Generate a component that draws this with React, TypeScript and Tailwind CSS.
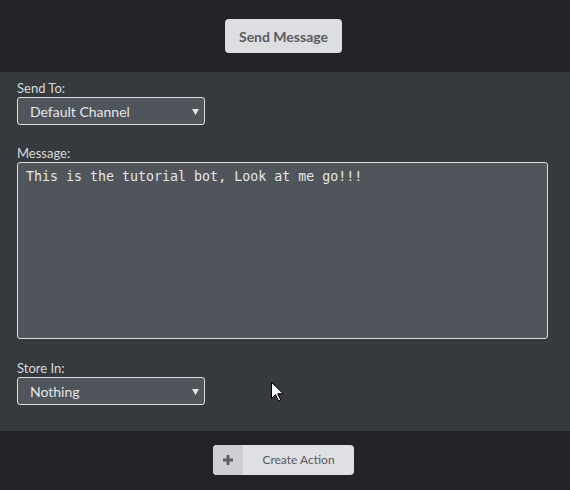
import React from 'react';

const Caret = () => (
  <svg width="7" height="6" viewBox="0 0 7 6" className="absolute right-[5px] top-[11px]">
    <path d="M0 0h7L3.5 6z" fill="#e4e5e7" />
  </svg>
);

const FakeSelect = ({ value }: { value: string }) => (
  <div className="relative w-[188px] h-[28px] rounded-[3px] border border-[#dcdde0] bg-[#50545b] pl-[12px] flex items-center text-[14px] text-[#e6e7e9]">
    {value}
    <Caret />
  </div>
);

export default function App() {
  return (
    <div className="w-[570px] h-[490px] flex flex-col bg-[#222327] font-['Lato',sans-serif] relative">
      <div className="h-[72px] flex items-start justify-center pt-[19px] pr-[3px]">
        <button className="w-[117px] h-[34px] rounded-[4px] bg-[#dddee1] text-[14px] font-bold text-[#5b5c5f]">
          Send Message
        </button>
      </div>

      <div className="h-[359px] bg-[#36393e] px-[17px] pt-[8px] flex flex-col">
        <label className="text-[13px] leading-[17px] text-[#d9dadc]">Send To:</label>
        <FakeSelect value="Default Channel" />

        <label className="text-[13px] leading-[17px] text-[#d9dadc] mt-[20px]">Message:</label>
        <div className="w-[531px] h-[177px] rounded-[3px] border border-[#dcdde0] bg-[#50545b] px-[8px] pt-[4px] font-['DejaVu_Sans_Mono',monospace] text-[13.3px] text-[#e6e7e9] whitespace-pre">
          This is the tutorial bot, Look at me go!!!
        </div>

        <label className="text-[13px] leading-[17px] text-[#d9dadc] mt-[21px]">Store In:</label>
        <FakeSelect value="Nothing" />
      </div>

      <div className="flex-1 flex items-start justify-center pt-[14px] pr-[3px]">
        <button className="w-[141px] h-[30px] rounded-[4px] overflow-hidden flex bg-[#dfe0e3]">
          <span className="w-[30px] h-full bg-[#cecfd2] flex items-center justify-center">
            <svg width="10" height="10" viewBox="0 0 10 10">
              <path d="M3.5 0h3v3.5H10v3H6.5V10h-3V6.5H0v-3h3.5z" fill="#5e5f62" />
            </svg>
          </span>
          <span className="flex-1 h-full flex items-center justify-center text-[12px] text-[#58595c]">
            Create Action
          </span>
        </button>
      </div>

      <svg width="13" height="20" viewBox="0 0 13 20" className="absolute left-[271px] top-[382px]">
        <path d="M0.5 0.5v16l4-4 3 6.5 2.2-1-3-6.3h5.6z" fill="#fff" stroke="#000" strokeWidth="1" />
      </svg>
    </div>
  );
}
